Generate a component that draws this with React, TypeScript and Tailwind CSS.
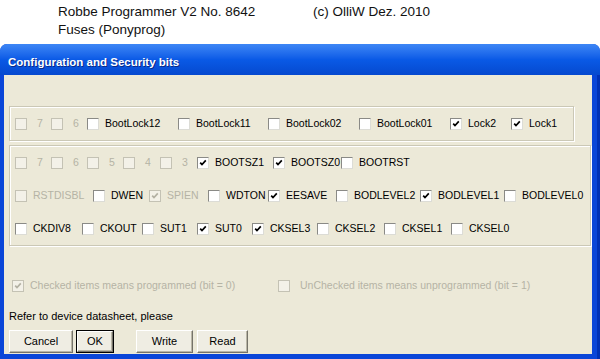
import clsx from "clsx";

type Item = { label: string; w: string; checked?: boolean; disabled?: boolean; digit?: boolean };

const lockRow: Item[] = [
  { label: "7", w: "w-[36px]", disabled: true, digit: true },
  { label: "6", w: "w-[36px]", disabled: true, digit: true },
  { label: "BootLock12", w: "w-[91px]" },
  { label: "BootLock11", w: "w-[90px]" },
  { label: "BootLock02", w: "w-[91px]" },
  { label: "BootLock01", w: "w-[91px]" },
  { label: "Lock2", w: "w-[61px]", checked: true },
  { label: "Lock1", w: "w-[50px]", checked: true },
];

const fuseRows: Item[][] = [
  [
    { label: "7", w: "w-[36px]", disabled: true, digit: true },
    { label: "6", w: "w-[36px]", disabled: true, digit: true },
    { label: "5", w: "w-[36px]", disabled: true, digit: true },
    { label: "4", w: "w-[37px]", disabled: true, digit: true },
    { label: "3", w: "w-[37px]", disabled: true, digit: true },
    { label: "BOOTSZ1", w: "w-[76px]", checked: true },
    { label: "BOOTSZ0", w: "w-[68px]", checked: true },
    { label: "BOOTRST", w: "w-[80px]" },
  ],
  [
    { label: "RSTDISBL", w: "w-[78px]", disabled: true },
    { label: "DWEN", w: "w-[56px]" },
    { label: "SPIEN", w: "w-[59px]", checked: true, disabled: true },
    { label: "WDTON", w: "w-[60px]" },
    { label: "EESAVE", w: "w-[68px]", checked: true },
    { label: "BODLEVEL2", w: "w-[84px]" },
    { label: "BODLEVEL1", w: "w-[84px]", checked: true },
    { label: "BODLEVEL0", w: "w-[80px]" },
  ],
  [
    { label: "CKDIV8", w: "w-[67px]" },
    { label: "CKOUT", w: "w-[60px]" },
    { label: "SUT1", w: "w-[55px]" },
    { label: "SUT0", w: "w-[55px]", checked: true },
    { label: "CKSEL3", w: "w-[65px]", checked: true },
    { label: "CKSEL2", w: "w-[67px]" },
    { label: "CKSEL1", w: "w-[67px]" },
    { label: "CKSEL0", w: "w-[60px]" },
  ],
];

function Box({ checked, disabled }: { checked?: boolean; disabled?: boolean }) {
  return (
    <span
      className={clsx(
        "relative z-10 flex h-[12px] w-[12px] shrink-0 items-center justify-center border",
        disabled
          ? "border-[#c4c2b4] bg-[#f3f1e8]"
          : "border-t-[#8a8a86] border-l-[#8a8a86] border-b-[#dcdcd6] border-r-[#dcdcd6] bg-white"
      )}
    >
      {checked && (
        <svg viewBox="0 0 8 8" className="h-[8px] w-[8px]">
          <path
            d="M1.2 3.6 L3 5.6 L6.8 1.4"
            fill="none"
            stroke={disabled ? "#b3b1a3" : "#000"}
            strokeWidth="1.7"
          />
        </svg>
      )}
    </span>
  );
}

function Check({ item }: { item: Item }) {
  return (
    <div className={clsx("flex shrink-0 items-center gap-[6px]", item.w)}>
      <Box checked={item.checked} disabled={item.disabled} />
      <span
        className={clsx(
          "whitespace-nowrap",
          item.digit && "ml-[4px]",
          item.disabled ? "text-[#b5b3a5]" : "text-black"
        )}
      >
        {item.label}
      </span>
    </div>
  );
}

function Btn({ label, w, def }: { label: string; w: string; def?: boolean }) {
  return (
    <div
      className={clsx(
        "flex h-[23px] items-center justify-center",
        w,
        def ? "border border-black" : ""
      )}
    >
      <div className="flex h-full w-full items-center justify-center border border-t-white border-l-white border-b-[#75736a] border-r-[#75736a] bg-[#efede3] shadow-[inset_-1px_-1px_0_#b9b6a6]">
        {label}
      </div>
    </div>
  );
}

export default function App() {
  return (
    <div
      className="flex h-[359px] w-[600px] flex-col bg-white text-[11px] text-black"
      style={{ fontFamily: '"Liberation Sans", Arial, sans-serif' }}
    >
      <div className="flex h-[44px] flex-col pl-[58px] pt-[3px] text-[13.5px] leading-[18px] text-[#111]">
        <div className="flex">
          <span className="w-[255px]">Robbe Programmer V2 No. 8642</span>
          <span>(c) OlliW Dez. 2010</span>
        </div>
        <span>Fuses (Ponyprog)</span>
      </div>

      <div className="flex flex-1 flex-col overflow-hidden rounded-t-[7px] bg-[#0a46d8]">
        <div className="flex h-[31px] items-center bg-gradient-to-b from-[#3d86f5] via-[#0a5ae6] to-[#0649cf] pl-[8px] pt-[6px] text-[11.5px] font-bold text-white [text-shadow:1px_1px_0_#0a2a8a]">
          Configuration and Security bits
        </div>
        <div className="flex flex-1 pb-[5px] pl-[4px] pr-[8px] shadow-[inset_-3px_0_0_#0031b5]">
          <div className="flex flex-1 flex-col bg-[#ece9d8] pl-[5px] pt-[31px]">
            <div className="flex h-[35px] w-[565px] items-center border border-[#cbc8b6] pl-[5px] text-[10.5px] shadow-[inset_1px_1px_0_#fff,1px_1px_0_#fff]">
              {lockRow.map((it) => (
                <Check key={it.label} item={it} />
              ))}
            </div>
            <div className="mt-[4px] flex h-[101px] w-[582px] flex-col justify-center gap-[21px] border border-[#cbc8b6] pl-[5px] text-[10.5px] shadow-[inset_1px_1px_0_#fff,1px_1px_0_#fff]">
              {fuseRows.map((row, i) => (
                <div key={i} className="flex h-[12px] items-center">
                  {row.map((it) => (
                    <Check key={it.label} item={it} />
                  ))}
                </div>
              ))}
            </div>

            <div className="mt-[33px] flex h-[14px] items-center pl-[3px] text-[10.5px] text-[#b5b3a5]">
              <div className="flex w-[266px] items-center gap-[6px]">
                <Box checked disabled />
                <span>Checked items means programmed (bit = 0)</span>
              </div>
              <div className="flex items-center gap-[10px]">
                <Box disabled />
                <span>UnChecked items means unprogrammed (bit = 1)</span>
              </div>
            </div>

            <div className="mt-[16px] h-[14px] leading-[14px]">Refer to device datasheet, please</div>

            <div className="mt-[7px] flex items-center">
              <Btn label="Cancel" w="w-[64px]" />
              <div className="ml-[3px]">
                <Btn label="OK" w="w-[38px]" def />
              </div>
              <div className="ml-[22px]">
                <Btn label="Write" w="w-[57px]" />
              </div>
              <div className="ml-[4px]">
                <Btn label="Read" w="w-[51px]" />
              </div>
            </div>
          </div>
        </div>
      </div>
    </div>
  );
}
